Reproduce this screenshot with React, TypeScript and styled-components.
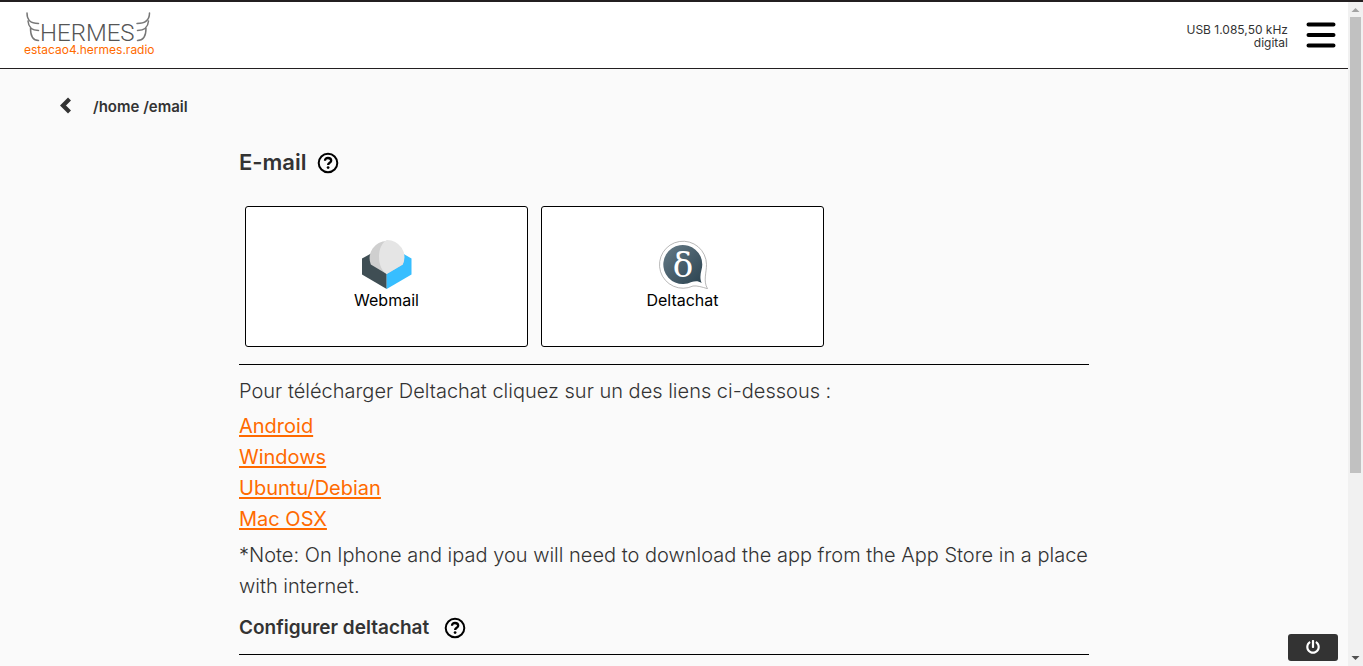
import React from 'react';
import styled, { createGlobalStyle } from 'styled-components';
import { FaPowerOff } from 'react-icons/fa';

const GlobalStyle = createGlobalStyle`
  *, *::before, *::after { box-sizing: border-box; }
  body {
    margin: 0;
    background: #fafafa;
    color: #333;
    font-family: Inter, "Open Sans", sans-serif;
  }
`;

const Shell = styled.div`
  display: flex;
  height: 100vh;
  border-top: 2px solid #231f20;
  overflow: hidden;
`;

const Page = styled.div`
  display: flex;
  flex: 1;
  flex-direction: column;
  min-width: 0;
`;

const Header = styled.header`
  display: flex;
  flex: none;
  align-items: center;
  justify-content: space-between;
  height: 67px;
  padding: 0 12px 0 24px;
  background: #fff;
  border-bottom: 1px solid #231f20;
`;

const Brand = styled.a`
  display: flex;
  flex-direction: column;
  color: #ff6a00;
  font-size: 12px;
  line-height: 14px;
  text-decoration: none;

  svg { display: block; overflow: visible; }
`;

const RadioArea = styled.div`
  display: flex;
  align-items: center;
  gap: 18px;
`;

const RadioStatus = styled.p`
  margin: 0;
  padding-top: 2px;
  font-size: 12px;
  line-height: 13px;
  text-align: right;
`;

const IconButton = styled.button`
  display: flex;
  padding: 0;
  border: 0;
  background: none;
  color: #000;
`;

const Content = styled.div`
  flex: 1;
  min-height: 0;
  overflow: hidden;
`;

const Breadcrumb = styled.nav`
  display: flex;
  gap: 21px;
  height: 48px;
  padding: 28px 0 0 59px;
  font-size: 15px;
  font-weight: 600;
  line-height: 20px;

  a { color: inherit; text-decoration: none; }
`;

const BackButton = styled(IconButton)`
  align-items: center;
  height: 16px;
  color: #333;
`;

const Centered = styled.div`
  padding-right: 20px;
`;

const Main = styled.main`
  width: 850px;
  max-width: calc(100% - 40px);
  margin: 0 auto;
`;

const Title = styled.h1<{ $small?: boolean }>`
  display: flex;
  align-items: center;
  gap: ${({ $small }) => ($small ? 15 : 10)}px;
  margin: ${({ $small }) => ($small ? '10px 0 11px' : '30px 0 28px')};
  font-size: ${({ $small }) => ($small ? 19 : 22)}px;
  font-weight: 600;
  line-height: 31px;
`;

const Cards = styled.div`
  display: flex;
  gap: 13px;
  padding: 0 6px 17px;
  border-bottom: 1px solid #000;
`;

const Card = styled.a`
  display: flex;
  flex: 0 1 283px;
  flex-direction: column;
  align-items: center;
  height: 141px;
  padding-top: 32px;
  border: 1px solid #000;
  border-radius: 3px;
  background: #fff;
  color: #000;
  font-size: 16px;
  line-height: 22px;
  text-decoration: none;
`;

const Text = styled.p`
  margin: 0;
  padding: 11px 0 4px;
  font-size: 20px;
  font-weight: 300;
  line-height: 31px;
`;

const Note = styled(Text)`
  padding: 5px 0 0;
`;

const Links = styled.ul`
  margin: 0;
  padding: 0;
  list-style: none;
  font-size: 20px;
  line-height: 31px;

  a { color: #ff6a00; text-underline-offset: 2px; text-decoration-thickness: 2px; }
`;

const Rule = styled.hr`
  margin: 0;
  border: 0;
  border-top: 1px solid #000;
`;

const PowerButton = styled.button`
  position: fixed;
  right: 25px;
  bottom: 5px;
  display: flex;
  align-items: center;
  justify-content: center;
  width: 50px;
  height: 27px;
  padding: 0 0 2px;
  border: 0;
  border-radius: 3px;
  background: #333;
  color: #fff;
  font-size: 14px;
`;

const ScrollBar = styled.div`
  display: flex;
  flex: none;
  flex-direction: column;
  width: 15px;
  background: #f1f1f1;
`;

const ScrollTrack = styled.div`
  flex: 1;
  padding: 0 2px;
`;

const ScrollThumb = styled.div`
  height: 72%;
  background: #c1c1c1;
`;

const Logo = () => (
  <svg width="132" height="30" viewBox="0 0 132 30" role="img" aria-label="Hermes">
    <text x="16" y="28" fontFamily="Roboto, sans-serif" fontSize="24" fontWeight="300" fill="#555">HERMES</text>
    <g fill="none" stroke="#777" strokeWidth="1.500" strokeLinecap="round">
      <path d="M3 0C3 6 5 10.500 14.500 10.500M4 8C4.500 14 8 17.500 14.500 17.500M6.500 15.500C6.500 23 9 27.500 14.500 27.500" />
      <path d="M125.500 0C125.500 6 123 10.500 113 10.500M124.500 8C124 14 120 17.500 113.500 17.500M122 15.500C122 23 119.500 27.500 113.500 27.500" />
    </g>
  </svg>
);

const MenuIcon = () => (
  <svg width="30" height="26" viewBox="0 0 30 26" aria-hidden="true">
    <path d="M2.500 2.500h25M2.500 13h25M2.500 23.500h25" stroke="#000" strokeWidth="4" strokeLinecap="round" />
  </svg>
);

const ChevronIcon = () => (
  <svg width="13" height="19" viewBox="0 0 13 19" aria-hidden="true">
    <path d="M10.500 3 4 9.500l6.500 6.500" fill="none" stroke="currentColor" strokeWidth="4.200" />
  </svg>
);

const HelpIcon = () => (
  <svg width="22" height="22" viewBox="0 0 22 22" fill="none" stroke="#000" aria-hidden="true">
    <circle cx="11" cy="11" r="9.300" strokeWidth="2" />
    <path d="M8 8.800C8 6.900 9.300 6 11 6s3.200 1 3.200 2.700c0 2.100-3.100 2.100-3.100 4.200" strokeWidth="2.300" />
    <circle cx="11.100" cy="15.600" r="1.400" fill="#000" stroke="none" />
  </svg>
);

const WebmailIcon = () => (
  <svg width="50" height="50" viewBox="0 0 50 50" aria-hidden="true">
    <path d="M0 19.500 10 14l14.700 20v16L0 35.500Z" fill="#3f4e54" />
    <path d="M49.500 19.500 40 14 24.700 34v16L49.500 35.500Z" fill="#37beff" />
    <path d="M8.800 25.500a17.200 17.200 0 1 1 32 0L24.700 35Z" fill="#cfcfcf" />
    <path d="M24.700 1C19.500 4.500 17 10 17 18s3 14 7.700 17l16.100-9.500A17.200 17.200 0 0 0 24.700 1Z" fill="#e5e5e5" />
  </svg>
);

const DeltachatIcon = () => (
  <svg width="50" height="50" viewBox="0 0 50 50" aria-hidden="true">
    <defs>
      <linearGradient id="bubble" x1="0" y1="0" x2="1" y2="1">
        <stop offset="0" stopColor="#667b87" />
        <stop offset="1" stopColor="#2b4350" />
      </linearGradient>
    </defs>
    <path d="M49.500 49.700C44 48 39 46.500 35 47A23.500 23.500 0 1 1 48.500 25.500C48.500 34 45 42 49.500 49.700Z" fill="#fff" stroke="#999" strokeWidth=".7" />
    <path d="M43.700 44C40 41.500 37 42 33.500 43A19.500 19.500 0 1 1 44.300 25.500C44.300 31 40.500 37 43.700 44Z" fill="url(#bubble)" />
    <text x="25" y="38" textAnchor="middle" fontFamily="DejaVu Serif, serif" fontSize="34" fill="#fff">δ</text>
  </svg>
);

const ScrollArrow = ({ down }: { down?: boolean }) => (
  <svg width="15" height="15" viewBox="0 0 15 15" aria-hidden="true">
    {down ? <path d="M3.500 5h8l-4 4Z" fill="#505050" /> : <path d="M3.500 10h8l-4-4Z" fill="#a3a3a3" />}
  </svg>
);

const downloads = ['Android', 'Windows', 'Ubuntu/Debian', 'Mac OSX'];

export default function App() {
  return (
    <>
      <GlobalStyle />
      <Shell>
        <Page>
          <Header>
            <Brand href="#">
              <Logo />
              estacao4.hermes.radio
            </Brand>
            <RadioArea>
              <RadioStatus>USB 1.085,50 kHz<br />digital</RadioStatus>
              <IconButton aria-label="Menu"><MenuIcon /></IconButton>
            </RadioArea>
          </Header>
          <Content>
            <Breadcrumb>
              <BackButton aria-label="Back"><ChevronIcon /></BackButton>
              <span><a href="#home">/home</a> <a href="#email">/email</a></span>
            </Breadcrumb>
            <Centered>
              <Main>
                <Title>E-mail<IconButton aria-label="Help"><HelpIcon /></IconButton></Title>
                <Cards>
                  <Card href="#webmail"><WebmailIcon />Webmail</Card>
                  <Card href="#deltachat"><DeltachatIcon />Deltachat</Card>
                </Cards>
                <Text>Pour télécharger Deltachat cliquez sur un des liens ci-dessous :</Text>
                <Links>
                  {downloads.map((name) => (
                    <li key={name}><a href="#download">{name}</a></li>
                  ))}
                </Links>
                <Note>*Note: On Iphone and ipad you will need to download the app from the App Store in a place with internet.</Note>
                <Title as="h2" $small>Configurer deltachat<IconButton aria-label="Help"><HelpIcon /></IconButton></Title>
                <Rule />
              </Main>
            </Centered>
          </Content>
        </Page>
        <ScrollBar aria-hidden="true">
          <ScrollArrow />
          <ScrollTrack><ScrollThumb /></ScrollTrack>
          <ScrollArrow down />
        </ScrollBar>
      </Shell>
      <PowerButton aria-label="Power"><FaPowerOff /></PowerButton>
    </>
  );
}
